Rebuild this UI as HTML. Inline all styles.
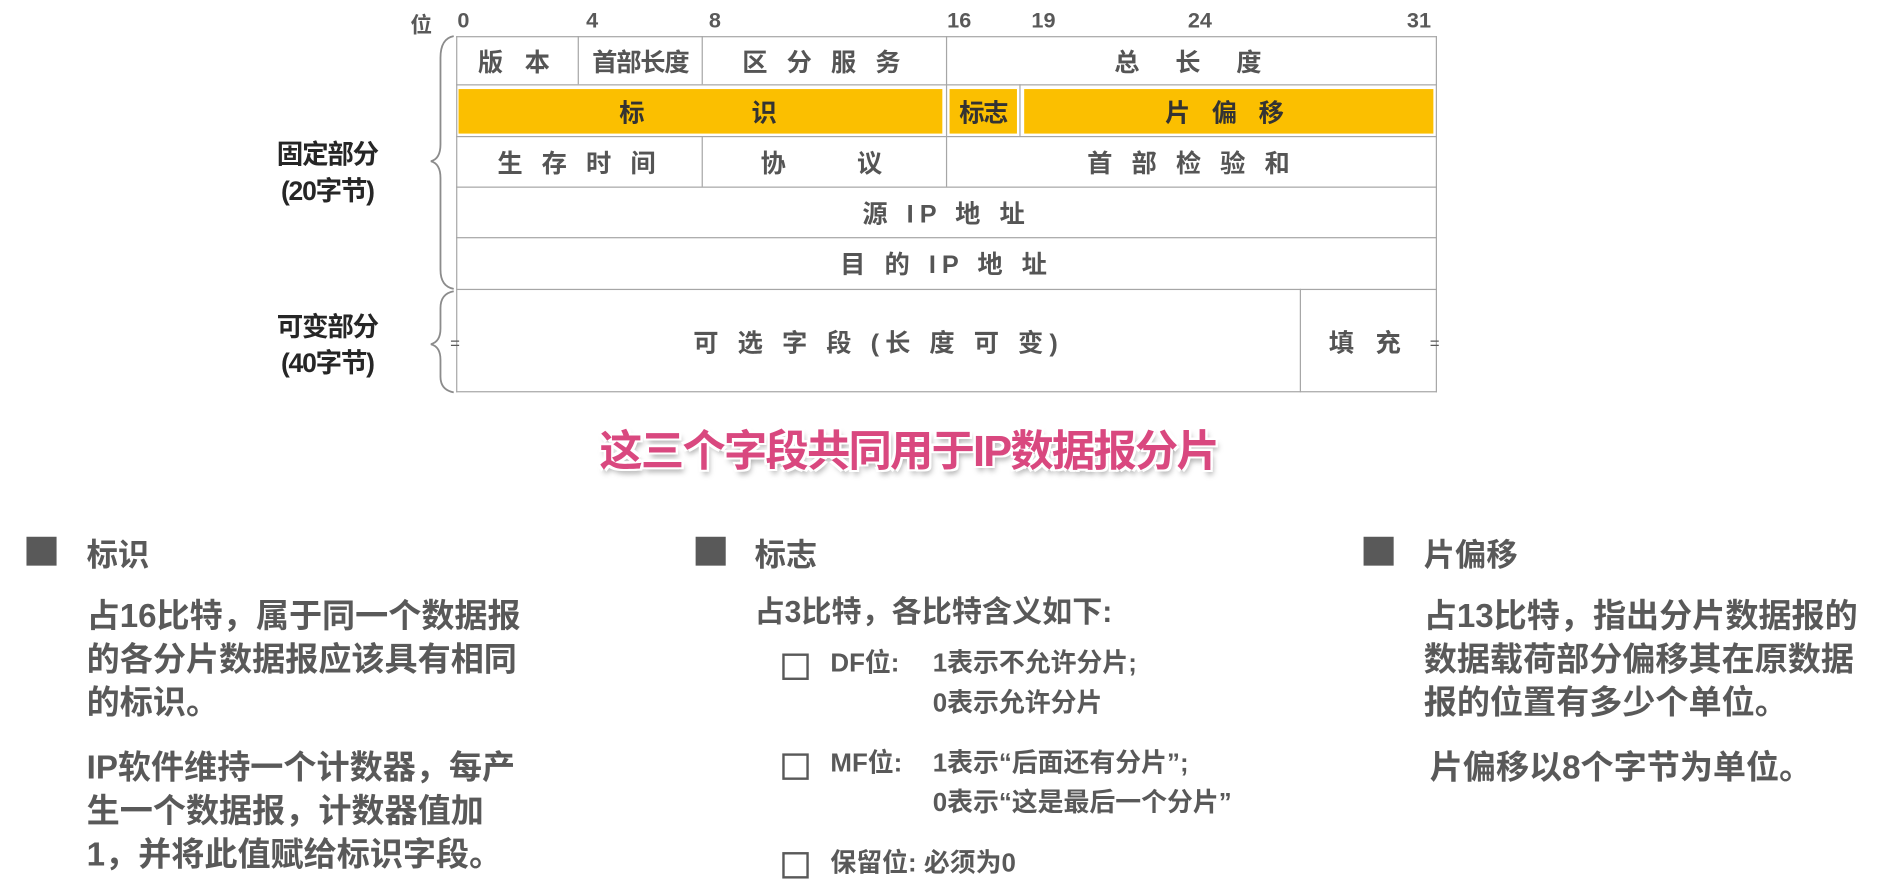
<!DOCTYPE html>
<html><head><meta charset="utf-8"><style>
html,body{margin:0;padding:0;background:#fff;width:1887px;height:885px;overflow:hidden}
#w{position:absolute;left:0;top:0;width:1568px;height:736px;transform:scale(1.2035);transform-origin:0 0;font-family:"Liberation Sans","Noto Sans CJK SC",sans-serif;color:#595959}
.a{position:absolute;white-space:nowrap}
.c{position:absolute;display:flex;align-items:center;justify-content:center;font-weight:bold;font-size:21px;color:#555;white-space:pre;letter-spacing:4px}
.hl{position:absolute;height:0;border-top:1.5px solid #a6a6a6}
.vl{position:absolute;width:0;border-left:1.5px solid #a6a6a6}
.y{position:absolute;background:#fbbf00}
.b{font-weight:bold}
.bit{position:absolute;font-weight:bold;font-size:18px;top:7px;color:#595959}
.sq{position:absolute;width:25px;height:24px;background:#595959}
.cb{position:absolute;width:18px;height:18px;border:2.5px solid #595959}
.t{position:absolute;font-weight:bold;font-size:27.5px;line-height:36px;color:#595959;white-space:nowrap}
.m{position:absolute;font-weight:bold;font-size:21.5px;line-height:33px;color:#595959;white-space:nowrap}
</style></head><body><div id="w">
<div class="bit" style="left:341px">位</div>
<div class="bit" style="left:380px">0</div>
<div class="bit" style="left:487px">4</div>
<div class="bit" style="left:589px">8</div>
<div class="bit" style="left:787px">16</div>
<div class="bit" style="left:857px">19</div>
<div class="bit" style="left:987px">24</div>
<div class="bit" style="left:1169px">31</div>
<div class="y" style="left:381px;top:74px;width:402px;height:37px"></div>
<div class="y" style="left:789px;top:74px;width:56px;height:37px"></div>
<div class="y" style="left:851px;top:74px;width:340px;height:37px"></div>
<div class="hl" style="left:379px;top:30px;width:815px"></div>
<div class="hl" style="left:379px;top:70px;width:815px"></div>
<div class="hl" style="left:379px;top:113px;width:815px"></div>
<div class="hl" style="left:379px;top:155px;width:815px"></div>
<div class="hl" style="left:379px;top:197px;width:815px"></div>
<div class="hl" style="left:379px;top:240px;width:815px"></div>
<div class="hl" style="left:379px;top:325px;width:815px"></div>
<div class="vl" style="left:379px;top:30px;height:296px"></div>
<div class="vl" style="left:1193px;top:30px;height:296px"></div>
<div class="vl" style="left:480px;top:30px;height:40px"></div>
<div class="vl" style="left:583px;top:30px;height:40px"></div>
<div class="vl" style="left:786px;top:30px;height:125px"></div>
<div class="vl" style="left:583px;top:113px;height:42px"></div>
<div class="vl" style="left:847px;top:70px;height:43px"></div>
<div class="vl" style="left:1080px;top:240px;height:86px"></div>
<div class="c" style="left:380px;top:31px;width:100px;height:39px;letter-spacing:6px">版 本</div>
<div class="c" style="left:481px;top:31px;width:102px;height:39px;letter-spacing:-1px">首部长度</div>
<div class="c" style="left:584px;top:31px;width:202px;height:39px;letter-spacing:5px">区 分 服 务</div>
<div class="c" style="left:787px;top:31px;width:406px;height:39px;letter-spacing:6px">总  长  度</div>
<div class="c" style="left:380px;top:72px;width:406px;height:41px;color:#333;letter-spacing:6px">标       识</div>
<div class="c" style="left:787px;top:72px;width:60px;height:41px;color:#333;letter-spacing:-1px">标志</div>
<div class="c" style="left:848px;top:72px;width:345px;height:41px;color:#333;letter-spacing:6px">片 偏 移</div>
<div class="c" style="left:380px;top:114px;width:203px;height:41px;letter-spacing:5px">生 存 时 间</div>
<div class="c" style="left:584px;top:114px;width:202px;height:41px;letter-spacing:5px">协     议</div>
<div class="c" style="left:787px;top:114px;width:406px;height:41px;letter-spacing:5px">首 部 检 验 和</div>
<div class="c" style="left:380px;top:156px;width:813px;height:41px;letter-spacing:5px">源 IP 地 址</div>
<div class="c" style="left:380px;top:198px;width:813px;height:42px;letter-spacing:5px">目 的 IP 地 址</div>
<div class="c" style="left:380px;top:241px;width:700px;height:85px;letter-spacing:5px">可 选 字 段 (长 度 可 变)</div>
<div class="c" style="left:1081px;top:241px;width:112px;height:85px;letter-spacing:6px">填 充</div>
<div class="a" style="left:374px;top:277px;font-size:14px">=</div>
<div class="a" style="left:1188px;top:277px;font-size:14px">=</div>
<svg class="a" style="left:352px;top:28px" width="30" height="300" viewBox="0 0 30 300">
<path d="M25 2 Q14 4 14 20 L14 92 Q14 104 6 106 Q14 108 14 120 L14 196 Q14 210 25 212" fill="none" stroke="#8c8c8c" stroke-width="1.5"/>
<path d="M25 214 Q14 216 14 228 L14 245 Q14 256 6 258 Q14 260 14 271 L14 285 Q14 296 25 298" fill="none" stroke="#8c8c8c" stroke-width="1.5"/>
</svg>
<div class="a b" style="left:230px;top:114px;font-size:22px;line-height:30px;color:#262626;text-align:center;letter-spacing:-1px">固定部分<br>(20字节)</div>
<div class="a b" style="left:230px;top:257px;font-size:22px;line-height:30px;color:#262626;text-align:center;letter-spacing:-1px">可变部分<br>(40字节)</div>
<div class="a b" style="left:498px;top:346px;font-size:36px;color:#d9487f;letter-spacing:-1.5px;text-shadow:-2px -2px 0 #fff,2px -2px 0 #fff,-2px 2px 0 #fff,2px 2px 0 #fff,2px 4px 5px rgba(0,0,0,.35)">这三个字段共同用于IP数据报分片</div>
<div class="sq" style="left:22px;top:446px"></div>
<div class="a" style="left:72px;top:441px;font-size:26px;font-weight:bold;color:#595959">标识</div>
<div class="t" style="left:72px;top:494px">占16比特，属于同一个数据报<br>的各分片数据报应该具有相同<br>的标识。</div>
<div class="t" style="left:72px;top:620px">IP软件维持一个计数器，每产<br>生一个数据报，计数器值加<br>1，并将此值赋给标识字段。</div>
<div class="sq" style="left:578px;top:446px"></div>
<div class="a" style="left:627px;top:441px;font-size:26px;font-weight:bold;color:#595959">标志</div>
<div class="t" style="left:627px;top:491px;font-size:25px">占3比特，各比特含义如下:</div>
<div class="cb" style="left:650px;top:543px"></div>
<div class="m" style="left:690px;top:535px">DF位:</div>
<div class="m" style="left:775px;top:535px">1表示不允许分片;<br>0表示允许分片</div>
<div class="cb" style="left:650px;top:626px"></div>
<div class="m" style="left:690px;top:618px">MF位:</div>
<div class="m" style="left:775px;top:618px">1表示“后面还有分片”;<br>0表示“这是最后一个分片”</div>
<div class="cb" style="left:650px;top:708px"></div>
<div class="m" style="left:690px;top:701px">保留位: 必须为0</div>
<div class="sq" style="left:1133px;top:446px"></div>
<div class="a" style="left:1183px;top:441px;font-size:26px;font-weight:bold;color:#595959">片偏移</div>
<div class="t" style="left:1183px;top:494px">占13比特，指出分片数据报的<br>数据载荷部分偏移其在原数据<br>报的位置有多少个单位。</div>
<div class="t" style="left:1188px;top:620px">片偏移以8个字节为单位。</div>
</div></body></html>
